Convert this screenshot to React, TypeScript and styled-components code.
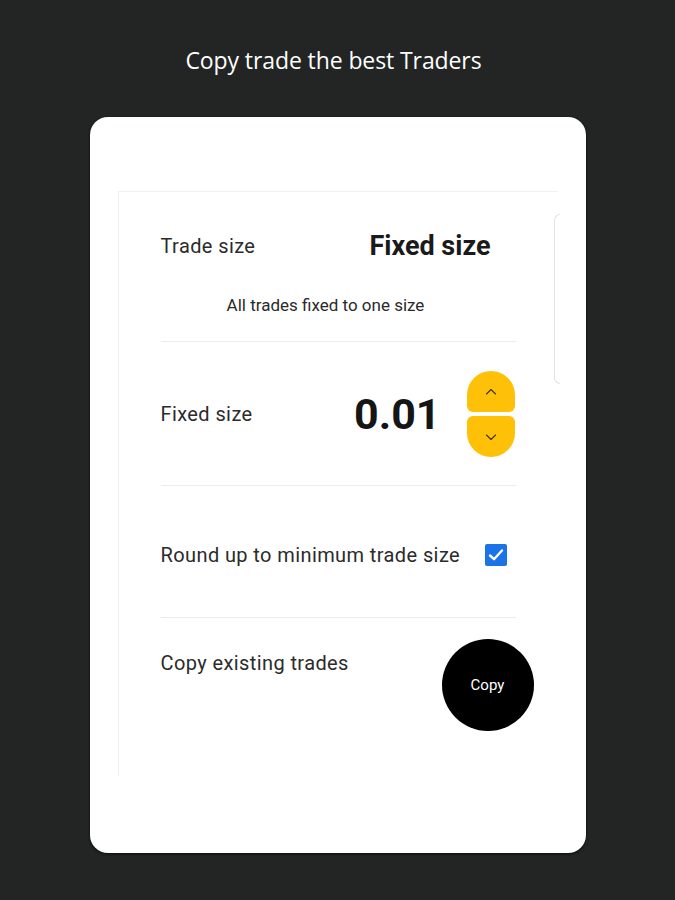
import styled, { createGlobalStyle } from "styled-components";

const GlobalStyle = createGlobalStyle`
  html, body {
    margin: 0;
    padding: 0;
    background: #222524;
  }
  body {
    font-family: Roboto, "Liberation Sans", sans-serif;
  }
`;

const Page = styled.div`
  width: 675px;
  height: 900px;
  display: flex;
  flex-direction: column;
  align-items: center;
  background: #222524;
  overflow: hidden;
`;

const Title = styled.h1`
  margin: 0 8px 0 0;
  padding-top: 44px;
  height: 117px;
  box-sizing: border-box;
  font-family: "Open Sans", "DejaVu Sans", sans-serif;
  font-weight: 400;
  font-size: 23px;
  line-height: 32px;
  letter-spacing: -0.1px;
  color: #ffffff;
`;

const Card = styled.div`
  width: 496px;
  height: 736px;
  box-sizing: border-box;
  background: #ffffff;
  border-radius: 18px;
  box-shadow: 0 1px 3px rgba(0, 0, 0, 0.7);
  padding: 74px 0 0 28px;
`;

const Panel = styled.div`
  position: relative;
  width: 440px;
  height: 585px;
  box-sizing: border-box;
  border-top: 1px solid #f1f1f1;
  border-left: 1px solid #f1f1f1;
  padding-left: 42px;
`;

const ScrollEdge = styled.div`
  position: absolute;
  left: 435px;
  top: 22px;
  width: 6px;
  height: 170px;
  box-sizing: border-box;
  border: 1.5px solid #e3e3e3;
  border-right: none;
  border-radius: 6px 0 0 6px;
`;

const Section = styled.div<{ $pad: string; $last?: boolean }>`
  width: 355px;
  padding: ${(p) => p.$pad};
  border-bottom: ${(p) => (p.$last ? "none" : "1px solid #ececec")};
`;

const Row = styled.div<{ $align?: string }>`
  display: flex;
  align-items: ${(p) => p.$align || "center"};
  justify-content: space-between;
`;

const Label = styled.span`
  font-size: 20px;
  line-height: 24px;
  letter-spacing: 0.4px;
  color: #2b2b2b;
`;

const ModeValue = styled.span`
  font-size: 27px;
  font-weight: 700;
  line-height: 30px;
  color: #1a1a1a;
  margin-right: 25px;
`;

const Hint = styled.div`
  margin-top: 34px;
  padding-right: 25px;
  text-align: center;
  font-size: 17px;
  line-height: 20px;
  color: #2a2a2a;
`;

const ValueGroup = styled.div`
  display: flex;
  align-items: center;
  gap: 26px;
  margin-right: 1px;
`;

const Amount = styled.span`
  font-size: 43px;
  font-weight: 700;
  line-height: 50px;
  color: #151515;
`;

const Stepper = styled.div`
  display: flex;
  flex-direction: column;
  gap: 4px;
  width: 48px;
`;

const StepButton = styled.button<{ $dir: "up" | "down" }>`
  width: 48px;
  height: 41px;
  border: none;
  padding: 0;
  background: #ffc107;
  display: flex;
  align-items: center;
  justify-content: center;
  border-radius: ${(p) =>
    p.$dir === "up" ? "24px 24px 6px 6px" : "6px 6px 24px 24px"};
  cursor: pointer;
`;

const CheckBox = styled.div`
  width: 22px;
  height: 22px;
  border-radius: 2px;
  background: #1b73e8;
  display: flex;
  align-items: center;
  justify-content: center;
  margin-right: 9px;
`;

const CopyLabel = styled(Label)`
  margin-top: 12px;
`;

const CopyButton = styled.button`
  width: 92px;
  height: 92px;
  border-radius: 50%;
  border: none;
  background: #000000;
  color: #ffffff;
  font-family: Roboto, "Liberation Sans", sans-serif;
  font-size: 15px;
  margin-right: -18px;
  cursor: pointer;
`;

const Chevron = ({ dir }: { dir: "up" | "down" }) => (
  <svg width="12" height="8" viewBox="0 0 12 8" fill="none">
    <path
      d={dir === "up" ? "M1.5 6 L6 1.5 L10.5 6" : "M1.5 2 L6 6.5 L10.5 2"}
      stroke="#3a3320"
      strokeWidth="1.1"
      strokeLinecap="round"
      strokeLinejoin="round"
    />
  </svg>
);

const App = () => {
  return (
    <Page>
      <GlobalStyle />
      <Title>Copy trade the best Traders</Title>
      <Card>
        <Panel>
          <ScrollEdge />
          <Section $pad="39px 0 26px">
            <Row>
              <Label>Trade size</Label>
              <ModeValue>Fixed size</ModeValue>
            </Row>
            <Hint>All trades fixed to one size</Hint>
          </Section>
          <Section $pad="29px 0 28px">
            <Row>
              <Label>Fixed size</Label>
              <ValueGroup>
                <Amount>0.01</Amount>
                <Stepper>
                  <StepButton $dir="up">
                    <Chevron dir="up" />
                  </StepButton>
                  <StepButton $dir="down">
                    <Chevron dir="down" />
                  </StepButton>
                </Stepper>
              </ValueGroup>
            </Row>
          </Section>
          <Section $pad="57px 0 50px">
            <Row>
              <Label>Round up to minimum trade size</Label>
              <CheckBox>
                <svg width="16" height="14" viewBox="0 0 16 14" fill="none">
                  <path
                    d="M2 7.5 L6 11.2 L14 2.5"
                    stroke="#ffffff"
                    strokeWidth="2.4"
                    strokeLinecap="round"
                    strokeLinejoin="round"
                  />
                </svg>
              </CheckBox>
            </Row>
          </Section>
          <Section $pad="21px 0 0" $last>
            <Row $align="flex-start">
              <CopyLabel>Copy existing trades</CopyLabel>
              <CopyButton>Copy</CopyButton>
            </Row>
          </Section>
        </Panel>
      </Card>
    </Page>
  );
};

export default App;
